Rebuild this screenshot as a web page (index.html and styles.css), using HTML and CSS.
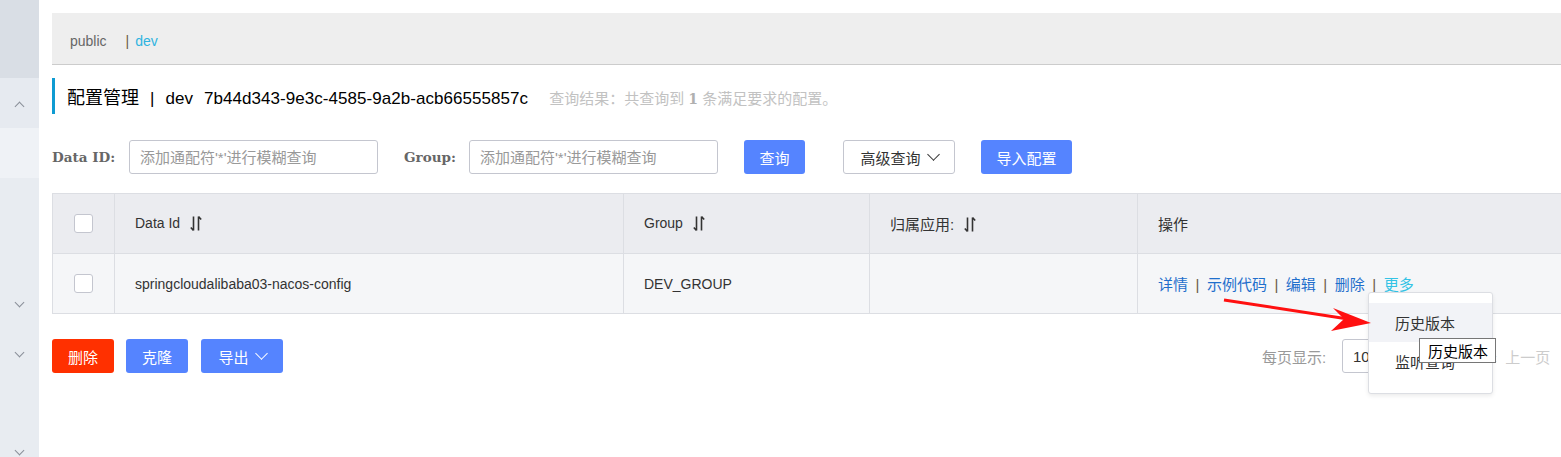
FILE: index.html
```html
<!DOCTYPE html>
<html lang="zh-CN">
<head>
<meta charset="utf-8">
<title>配置管理</title>
<link rel="stylesheet" href="styles.css">
</head>
<body>
<div class="app">
  <aside class="sidebar">
    <div class="sb-top"></div>
    <div class="sb-item sb-open"><span class="chev up"></span></div>
    <div class="sb-item sb-light"></div>
    <div class="sb-row r1"><span class="chev"></span></div>
    <div class="sb-row"><span class="chev"></span></div>
    <div class="sb-row r3"><span class="chev"></span></div>
  </aside>

  <main class="main">
    <div class="ns-bar">
      <span class="ns-public">public</span>
      <span class="ns-sep">|</span>
      <span class="ns-dev">dev</span>
    </div>

    <div class="title">
      <span class="title-main"><span class="title-cjk">配置管理</span><span class="gap"></span>|<span class="gap"></span>dev<span class="gap"></span>7b44d343-9e3c-4585-9a2b-acb66555857c</span>
      <span class="title-sub">查询结果：共查询到 <b>1</b> 条满足要求的配置。</span>
    </div>

    <div class="search">
      <label class="lbl">Data ID:</label>
      <input class="inp" placeholder="添加通配符'*'进行模糊查询">
      <label class="lbl lbl-group">Group:</label>
      <input class="inp" placeholder="添加通配符'*'进行模糊查询">
      <button class="btn btn-primary btn-query">查询</button>
      <button class="btn btn-normal btn-adv">高级查询 <span class="dd-arrow dark"></span></button>
      <button class="btn btn-primary btn-import">导入配置</button>
    </div>

    <table class="grid">
      <colgroup>
        <col class="c-chk"><col class="c-id"><col class="c-group"><col class="c-app"><col class="c-op">
      </colgroup>
      <thead>
        <tr>
          <th class="chk-cell"><span class="checkbox"></span></th>
          <th>Data Id <span class="sort"><svg width="12" height="17" viewBox="0 0 12 17"><path d="M3.5 1.5v14M3.5 15.5L0.8 12.5" fill="none" stroke="#333" stroke-width="1.6"/><path d="M8.5 15.5V1.5M8.5 1.5L11.2 4.5" fill="none" stroke="#333" stroke-width="1.6"/></svg></span></th>
          <th>Group <span class="sort"><svg width="12" height="17" viewBox="0 0 12 17"><path d="M3.5 1.5v14M3.5 15.5L0.8 12.5" fill="none" stroke="#333" stroke-width="1.6"/><path d="M8.5 15.5V1.5M8.5 1.5L11.2 4.5" fill="none" stroke="#333" stroke-width="1.6"/></svg></span></th>
          <th class="cjk">归属应用: <span class="sort"><svg width="12" height="17" viewBox="0 0 12 17"><path d="M3.5 1.5v14M3.5 15.5L0.8 12.5" fill="none" stroke="#333" stroke-width="1.6"/><path d="M8.5 15.5V1.5M8.5 1.5L11.2 4.5" fill="none" stroke="#333" stroke-width="1.6"/></svg></span></th>
          <th class="cjk">操作</th>
        </tr>
      </thead>
      <tbody>
        <tr>
          <td class="chk-cell"><span class="checkbox"></span></td>
          <td>springcloudalibaba03-nacos-config</td>
          <td>DEV_GROUP</td>
          <td></td>
          <td class="ops">
            <a class="op">详情</a><span class="op-sep">|</span><a class="op">示例代码</a><span class="op-sep">|</span><a class="op">编辑</a><span class="op-sep">|</span><a class="op">删除</a><span class="op-sep">|</span><a class="op op-more">更多</a>
          </td>
        </tr>
      </tbody>
    </table>

    <div class="footer">
      <div class="actions">
        <button class="btn btn-danger btn-del">删除</button>
        <button class="btn btn-primary btn-clone">克隆</button>
        <button class="btn btn-primary btn-export">导出 <span class="dd-arrow"></span></button>
      </div>
      <div class="pager">
        <span class="pager-lbl">每页显示:</span>
        <span class="pager-select">10</span>
        <span class="pager-prev">‹&nbsp; 上一页</span>
      </div>
    </div>
  </main>
</div>

<div class="menu">
  <div class="menu-item hover">历史版本</div>
  <div class="menu-item">监听查询</div>
</div>
<div class="tooltip">历史版本</div>

<svg class="annot" width="1561" height="457" viewBox="0 0 1561 457">
  <line x1="1224" y1="300" x2="1348" y2="319" stroke="#ff1010" stroke-width="3"/>
  <polygon points="1371,323 1333,308 1344,319 1331,331" fill="#ff1010"/>
</svg>
</body>
</html>
```

FILE: styles.css
```css
* { box-sizing: border-box; }
html, body { margin: 0; padding: 0; }
body {
  width: 1561px;
  height: 457px;
  overflow: hidden;
  background: #fff;
  font-family: "Liberation Sans", "Noto Sans CJK SC", sans-serif;
  font-size: 14px;
  color: #333;
  position: relative;
}
.app { display: flex; height: 457px; }

/* sidebar */
.sidebar {
  width: 39px;
  flex: none;
  display: flex;
  flex-direction: column;
  background: #e8ecf1;
  overflow: hidden;
}
.sidebar > div { flex: none; }
.sb-top { height: 78px; background: #d9dee5; }
.sb-item { height: 50px; display: flex; align-items: center; justify-content: center; }
.sb-open { background: #e6eaf0; }
.sb-light { background: #eff2f6; }
.sb-row { height: 50px; display: flex; align-items: center; justify-content: center; }
.sb-row.r1 { margin-top: 101px; }
.sb-row.r3 { margin-top: 48px; }
.chev {
  width: 7px; height: 7px;
  border-right: 1.2px solid #8a8f99;
  border-bottom: 1.2px solid #8a8f99;
  transform: rotate(45deg);
  margin-top: -4px;
}
.chev.up { transform: rotate(-135deg); margin-top: 6px; }

/* main */
.main {
  flex: 1;
  min-width: 0;
  padding: 13px 0 0 13px;
  overflow: hidden;
}
.ns-bar {
  height: 52px;
  background: #eeeeee;
  border-bottom: 1px solid #cccccc;
  display: flex;
  align-items: center;
  padding: 5px 0 0 18px;
  font-size: 14px;
}
.ns-public { color: #666; }
.ns-sep { color: #6b5a45; margin-left: 19px; margin-right: 6px; }
.ns-dev { color: #2fb4e0; }

.title {
  margin-top: 13px;
  height: 36px;
  border-left: 3px solid #0e9bd2;
  padding-left: 12px;
  display: flex;
  align-items: center;
}
.title-main { font-size: 17px; color: #000; letter-spacing: 0.05px; display: flex; align-items: baseline; }
.title-cjk { font-size: 18px; letter-spacing: 0; }
.gap { display: inline-block; width: 11px; }
.title-sub { font-size: 15px; color: #c2c2c2; margin-left: 21px; margin-top: 2px; }
.title-sub b { color: #b0b0b0; font-family: "DejaVu Serif", serif; font-size: 14px; }

/* search */
.search {
  margin-top: 26px;
  height: 34px;
  display: flex;
  align-items: center;
}
.lbl {
  font-family: "DejaVu Serif", serif;
  font-weight: bold;
  font-size: 13.5px;
  color: #666;
  width: 77px;
}
.lbl-group { width: 65px; margin-left: 26px; }
.inp {
  width: 249px;
  height: 34px;
  border: 1px solid #c4c6cf;
  border-radius: 3px;
  padding: 0 10px;
  font-family: inherit;
  font-size: 15px;
  color: #333;
  outline: none;
}
.inp::placeholder { color: #999; }
.btn {
  height: 34px;
  border-radius: 3px;
  border: 1px solid transparent;
  font-family: inherit;
  font-size: 15px;
  padding: 0;
  display: inline-flex;
  align-items: center;
  justify-content: center;
  cursor: pointer;
}
.btn-primary { background: #5584ff; color: #fff; }
.btn-danger { background: #ff3000; color: #fff; }
.btn-normal { background: #fff; color: #333; border-color: #c4c6cf; }
.btn-query { width: 61px; margin-left: 26px; }
.btn-adv { width: 112px; margin-left: 38px; }
.btn-import { width: 91px; margin-left: 26px; }
.dd-arrow {
  width: 9px; height: 9px;
  border-right: 1.5px solid #fff;
  border-bottom: 1.5px solid #fff;
  transform: rotate(45deg);
  margin: -5px 0 0 8px;
}
.dd-arrow.dark { border-color: #333; }

/* table */
.grid {
  margin-top: 19px;
  width: 1509px;
  border-collapse: collapse;
  table-layout: fixed;
}
.grid tr { height: 60px; }
.c-chk { width: 62px; }
.c-id { width: 509px; }
.c-group { width: 246px; }
.c-app { width: 268px; }
.c-op { width: 424px; }
.grid th, .grid td {
  border: 1px solid #dcdee3;
  padding: 0 0 0 20px;
  text-align: left;
  font-weight: normal;
  font-size: 14px;
  color: #333;
}
.grid th.cjk { font-size: 15px; }
.grid thead th { background: #ebecf0; }
.grid tbody td { background: #f5f6f8; }
.grid .chk-cell { padding: 0; text-align: center; }
.checkbox {
  display: inline-block;
  width: 19px; height: 19px;
  border: 1px solid #c4c6cf;
  border-radius: 3px;
  background: #fff;
  vertical-align: middle;
}
.sort { display: inline-block; vertical-align: middle; margin-left: 6px; margin-top: -3px; }
.sort svg { display: block; }
.grid td.ops { white-space: nowrap; font-size: 15px; }
.op { color: #1f6fcc; }
.op-more { color: #33c3e5; }
.op-sep { color: #6b5a45; margin: 0 7.5px; }

/* footer */
.footer {
  margin-top: 25px;
  width: 1509px;
  height: 34px;
  display: flex;
  align-items: center;
}
.actions { display: flex; }
.btn-del { width: 62px; }
.btn-clone { width: 62px; margin-left: 12px; }
.btn-export { width: 82px; margin-left: 13px; }
.pager {
  margin-left: auto;
  width: 299px;
  display: flex;
  align-items: center;
  white-space: nowrap;
  overflow: hidden;
}
.pager-lbl { color: #999; width: 80px; font-size: 15px; }
.pager-select {
  width: 70px;
  height: 34px;
  border: 1px solid #c4c6cf;
  border-radius: 3px;
  display: flex;
  align-items: center;
  padding-left: 10px;
  color: #333;
  font-size: 15px;
}
.pager-prev { color: #ccc; margin-left: 80px; font-size: 15px; }

/* overlay menu */
.menu {
  position: absolute;
  left: 1368px;
  top: 292px;
  width: 125px;
  height: 102px;
  background: #fff;
  border: 1px solid #dcdee3;
  border-radius: 3px;
  box-shadow: 0 2px 4px rgba(0,0,0,0.08);
  padding-top: 10px;
}
.menu-item {
  height: 39px;
  display: flex;
  align-items: center;
  padding-left: 26px;
  font-size: 15px;
  color: #333;
}
.menu-item.hover { background: #f2f3f7; }
.tooltip {
  position: absolute;
  left: 1419px;
  top: 338px;
  height: 25px;
  padding: 0 7px 0 8px;
  background: #fff;
  border: 1px solid #767676;
  font-size: 15px;
  color: #000;
  display: flex;
  align-items: center;
}
.annot { position: absolute; left: 0; top: 0; pointer-events: none; }
```
